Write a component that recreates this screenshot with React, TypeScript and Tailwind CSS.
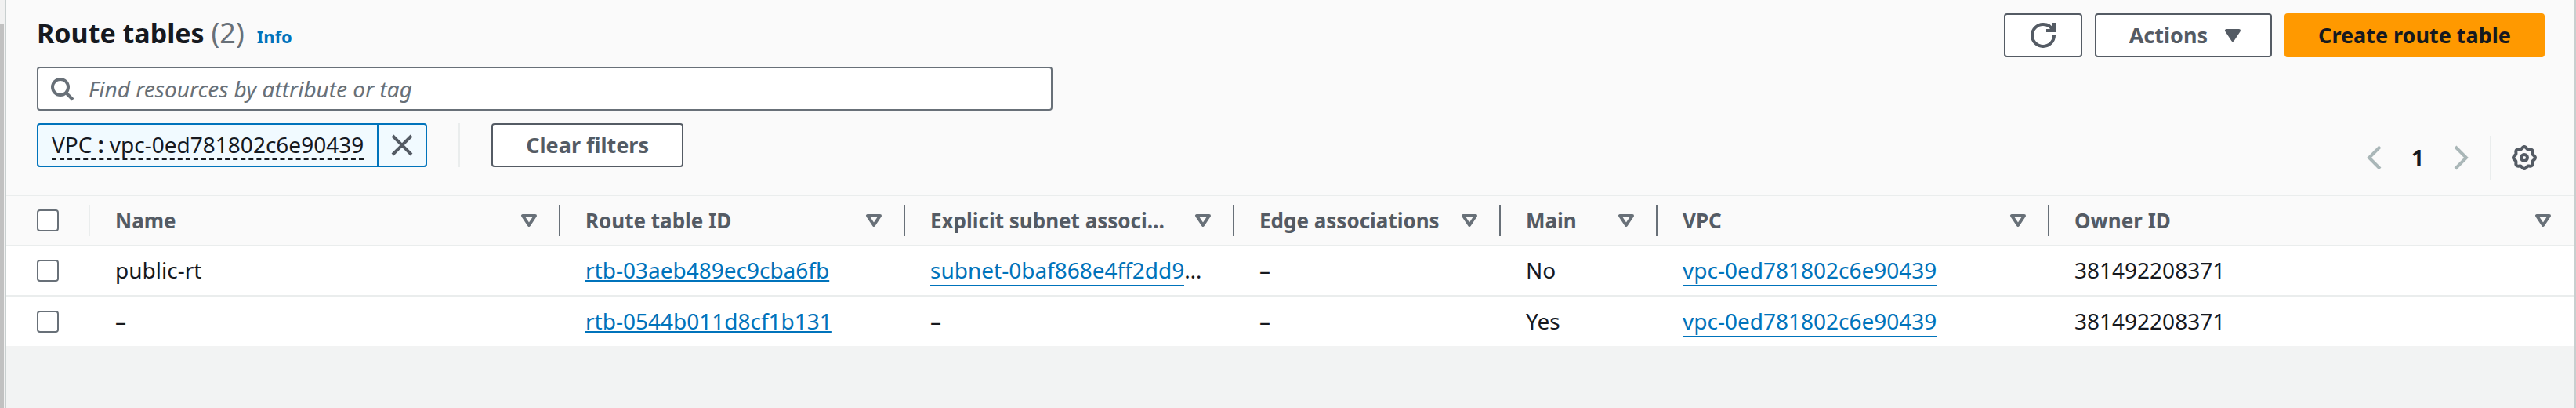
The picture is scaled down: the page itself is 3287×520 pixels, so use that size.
import type { ReactNode } from "react";

type Column = { label: string; width: string };

const columns: Column[] = [
  { label: "Name", width: "w-[600px]" },
  { label: "Route table ID", width: "w-[440px]" },
  { label: "Explicit subnet associ…", width: "w-[420px]" },
  { label: "Edge associations", width: "w-[340px]" },
  { label: "Main", width: "w-[200px]" },
  { label: "VPC", width: "w-[500px]" },
  { label: "Owner ID", width: "" },
];

type Row = {
  name: string;
  id: string;
  subnet: string | null;
  edge: string;
  main: string;
  vpc: string;
  owner: string;
};

const rows: Row[] = [
  {
    name: "public-rt",
    id: "rtb-03aeb489ec9cba6fb",
    subnet: "subnet-0baf868e4ff2dd9",
    edge: "–",
    main: "No",
    vpc: "vpc-0ed781802c6e90439",
    owner: "381492208371",
  },
  {
    name: "–",
    id: "rtb-0544b011d8cf1b131",
    subnet: null,
    edge: "–",
    main: "Yes",
    vpc: "vpc-0ed781802c6e90439",
    owner: "381492208371",
  },
];

const strokeProps = { fill: "none", stroke: "currentColor", strokeWidth: 2 } as const;

function SearchIcon() {
  return (
    <svg viewBox="0 0 16 16" className="size-8 shrink-0 text-[#687078]" {...strokeProps}>
      <circle cx="7" cy="7" r="5" />
      <path d="m15 15-4.5-4.5" />
    </svg>
  );
}

function CloseIcon() {
  return (
    <svg viewBox="0 0 16 16" className="size-8 shrink-0" {...strokeProps}>
      <path d="m2 2 12 12M14 2 2 14" />
    </svg>
  );
}

function RefreshIcon() {
  return (
    <svg viewBox="0 0 16 16" className="size-8 shrink-0" {...strokeProps}>
      <path d="M10 5h5V0" />
      <path d="M15 8a6.957 6.957 0 0 1-7 7 6.957 6.957 0 0 1-7-7 6.957 6.957 0 0 1 7-7 6.87 6.87 0 0 1 6.3 4" />
    </svg>
  );
}

function CaretFilled() {
  return (
    <svg viewBox="0 0 16 16" className="size-8 shrink-0" fill="currentColor" stroke="currentColor" strokeWidth="2" strokeLinejoin="round">
      <path d="M4 5h8l-4 6-4-6z" />
    </svg>
  );
}

function CaretOutline() {
  return (
    <svg viewBox="0 0 16 16" className="size-8 shrink-0 text-[#687078]" {...strokeProps} strokeLinejoin="round">
      <path d="M4 5h8l-4 6-4-6z" />
    </svg>
  );
}

function AngleIcon({ d }: { d: string }) {
  return (
    <svg viewBox="0 0 16 16" className="size-8 shrink-0" {...strokeProps}>
      <path d={d} />
    </svg>
  );
}

// Eight-lobed outline, sampled around the centre of a 16-unit box.
const gearPoints = Array.from({ length: 96 }, (_, i) => {
  const angle = (i / 96) * Math.PI * 2;
  const radius = 6.4 + 0.6 * Math.cos(8 * angle);
  return `${(8 + radius * Math.cos(angle)).toFixed(2)},${(8 + radius * Math.sin(angle)).toFixed(2)}`;
}).join(" ");

function GearIcon() {
  return (
    <svg viewBox="0 0 16 16" className="size-8 shrink-0" {...strokeProps} strokeLinejoin="round">
      <polygon points={gearPoints} />
      <circle cx="8" cy="8" r="2" />
    </svg>
  );
}

function Button({ children, label, className = "" }: { children: ReactNode; label?: string; className?: string }) {
  return (
    <button
      type="button"
      aria-label={label}
      className={`flex h-14 items-center rounded-sm border-2 border-[#545b64] bg-white text-[27px] font-bold text-[#545b64] ${className}`}
    >
      {children}
    </button>
  );
}

function Checkbox({ label }: { label: string }) {
  return (
    <input
      type="checkbox"
      aria-label={label}
      className="block size-7 appearance-none rounded-sm border-2 border-[#687078] bg-white checked:bg-[#0073bb]"
    />
  );
}

function Table() {
  return (
    <table className="w-full table-fixed border-collapse bg-white text-left">
      <thead className="bg-[#fafafa] text-[26px] text-[#545b64]">
        <tr className="h-[63px] border-b-2 border-[#eaeded]">
          <th className="w-[107px] p-0">
            <div className="flex h-10 items-center border-r-2 border-[#eaeded] pl-[39px]">
              <Checkbox label="Select all route tables" />
            </div>
          </th>
          {columns.map((column, i) => (
            <th key={column.label} scope="col" className={`p-0 font-bold ${column.width}`}>
              <div
                className={`flex h-10 items-center gap-3 border-r-2 pl-8 pr-[22px] ${
                  i < columns.length - 1 ? "border-[#687078]" : "border-transparent"
                }`}
              >
                <span className="min-w-0 flex-1 whitespace-nowrap">{column.label}</span>
                <CaretOutline />
              </div>
            </th>
          ))}
        </tr>
      </thead>
      <tbody>
        {rows.map((row) => (
          <tr key={row.id} className="h-16 border-b-2 border-[#eaeded] last:border-b-0">
            <td className="p-0 pl-[39px]">
              <Checkbox label={`Select ${row.id}`} />
            </td>
            <td className="truncate px-8 pt-0 pb-0.5">{row.name}</td>
            <td className="truncate px-8 pt-0 pb-0.5">
              <a href="#" className="text-[#0073bb] underline decoration-2 underline-offset-2 [text-decoration-skip-ink:none]">
                {row.id}
              </a>
            </td>
            <td className="whitespace-nowrap pt-0 pr-4 pb-0.5 pl-8">
              {row.subnet ? (
                <>
                  <a href="#" className="border-b-2 border-[#0073bb] text-[#0073bb]">
                    {row.subnet}
                  </a>
                  …
                </>
              ) : (
                "–"
              )}
            </td>
            <td className="truncate px-8 pt-0 pb-0.5">{row.edge}</td>
            <td className="truncate px-8 pt-0 pb-0.5">{row.main}</td>
            <td className="truncate px-8 pt-0 pb-0.5">
              <a href="#" className="border-b-2 border-[#0073bb] text-[#0073bb]">
                {row.vpc}
              </a>
            </td>
            <td className="truncate px-8 pt-0 pb-0.5">{row.owner}</td>
          </tr>
        ))}
      </tbody>
    </table>
  );
}

export default function App() {
  return (
    <div className="flex min-h-screen bg-[#f2f3f3] font-['Noto_Sans','Open_Sans',sans-serif] text-[28px] leading-9 text-[#16191f]">
      <div className="flex w-[7px] flex-col bg-[#f1f1f1] pr-[2px] pt-[31px]">
        <div className="flex-1 bg-[#c1c1c1]" />
      </div>
      <main className="min-w-0 flex-1 border-l border-r-2 border-[#c8cfcf]">
        <header className="flex justify-between border-b-2 border-[#eaeded] bg-[#fafafa] pb-[19px] pl-[39px] pr-[38px] pt-[17px]">
          <div className="flex min-w-0 flex-1 flex-col pb-4">
            <div className="flex h-[52px] items-baseline gap-4">
              <h1 className="text-[34px] leading-[50px] font-bold">
                Route tables <span className="text-4xl leading-[50px] font-normal text-[#687078]">(2)</span>
              </h1>
              <a href="#" className="text-[22px] font-bold text-[#0073bb]">
                Info
              </a>
            </div>
            <label className="mt-4 flex h-14 w-[1296px] max-w-full items-center gap-[18px] rounded-sm border-2 border-[#687078] bg-white px-[14px]">
              <SearchIcon />
              <input
                type="search"
                aria-label="Find resources"
                placeholder="Find resources by attribute or tag"
                className="min-w-0 flex-1 bg-transparent italic outline-none placeholder:text-[#687078]"
              />
            </label>
            <div className="mt-4 flex h-14 items-stretch">
              <div className="flex rounded-sm border-2 border-[#0073bb] bg-[#f1faff]">
                <span className="flex items-center px-[17px]">
                  <button type="button" className="border-b-2 border-dashed border-[#16191f]">
                    VPC <b>:</b> vpc-0ed781802c6e90439
                  </button>
                </span>
                <button
                  type="button"
                  aria-label="Remove filter"
                  className="flex w-[62px] items-center justify-center border-l-2 border-[#0073bb] text-[#545b64]"
                >
                  <CloseIcon />
                </button>
              </div>
              <div className="mx-10 border-l-2 border-[#eaeded]" />
              <Button className="px-[42px]">Clear filters</Button>
            </div>
          </div>
          <div className="flex flex-col items-end justify-between">
            <div className="flex gap-4">
              <Button label="Refresh" className="w-[100px] justify-center">
                <RefreshIcon />
              </Button>
              <Button className="gap-4 pl-[42px] pr-8">
                Actions
                <CaretFilled />
              </Button>
              <button type="button" className="h-14 rounded-sm bg-[#ff9900] px-[43px] text-[27px] font-bold">
                Create route table
              </button>
            </div>
            <nav aria-label="Pagination" className="flex h-14 items-center pr-[10px]">
              <button type="button" aria-label="Previous page" className="text-[#aab7b8]">
                <AngleIcon d="M12 1 5 8l7 7" />
              </button>
              <button type="button" className="w-[80px] font-bold">
                1
              </button>
              <button type="button" aria-label="Next page" className="text-[#aab7b8]">
                <AngleIcon d="m4 1 7 7-7 7" />
              </button>
              <div className="ml-5 mr-[26px] h-14 border-l-2 border-[#eaeded]" />
              <button type="button" aria-label="Preferences" className="text-[#545b64]">
                <GearIcon />
              </button>
            </nav>
          </div>
        </header>
        <Table />
      </main>
    </div>
  );
}
